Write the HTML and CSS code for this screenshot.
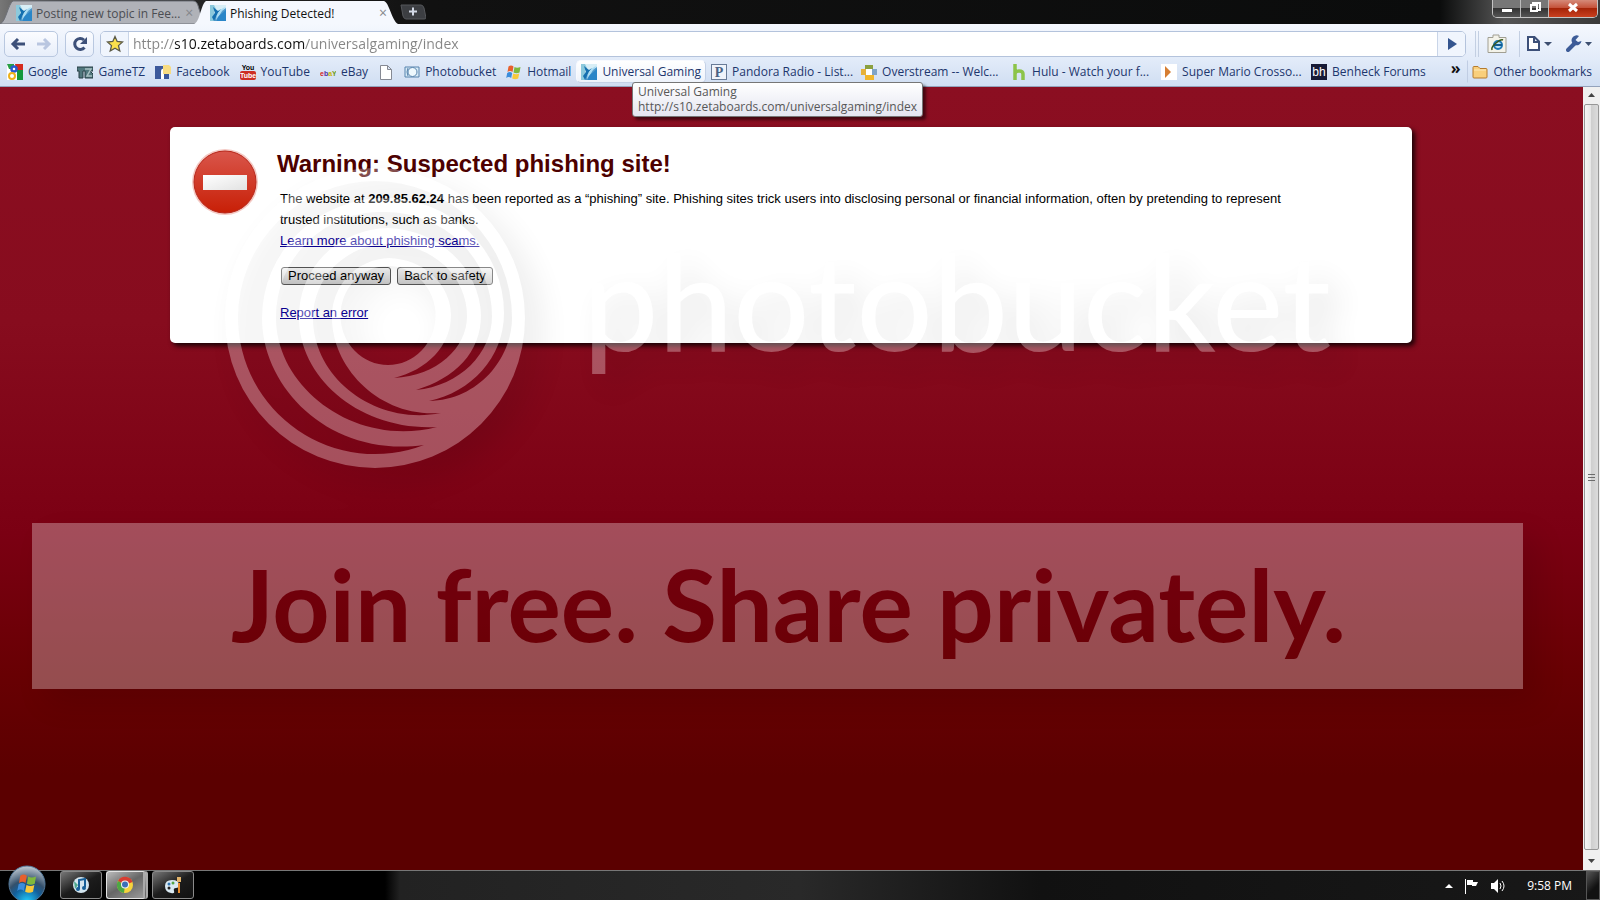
FILE: index.html
```html
<!DOCTYPE html>
<html lang="en">
<head>
    <meta charset="UTF-8">
    <meta name="viewport" content="width=device-width, initial-scale=1.0">
    <title>Phishing Detected!</title>
    <link rel="stylesheet" href="styles.css">
</head>
<body>
    <!-- shared icons -->
    <svg class="defs" width="0" height="0">
        <defs>
            <linearGradient id="zbBlue" x1="0" y1="0" x2="1" y2="1">
                <stop offset="0" stop-color="#8fd0ee"/>
                <stop offset="1" stop-color="#1566ab"/>
            </linearGradient>
            <symbol id="zeta" viewBox="0 0 16 16">
                <rect width="16" height="16" fill="#d8eef6"/>
                <path d="M0 0h4l2 4-2 3 2 4-1 5H0z" fill="#8cc9dc"/>
                <path d="M16 3v13H4q2-8 12-13z" fill="url(#zbBlue)"/>
                <path d="M3 2l5 4 3-2q-4 5-5 8l-2 4-2-4 3-4z" fill="#1570b0"/>
                <path d="M8 8q3-5 8-6-5 4-7 9l-3 4q0-4 2-7z" fill="#a9dcf3"/>
                <path d="M10 10l6-5v11H7q0-4 3-6z" fill="#2a86c8"/>
            </symbol>
            <symbol id="winflag" viewBox="0 0 16 16">
                <path d="M2.500 2.500q2.500-2 5 0L6.500 8q-2.500-2-5 0z" fill="#e8602c"/>
                <path d="M8.500 3q2.500 1.500 6 0l-1 5.500q-3 1.500-6 0z" fill="#7fb93c"/>
                <path d="M1.200 9q2.500-2 5 0l-1 5q-2.500-2-5 0z" fill="#3b8ddb"/>
                <path d="M7.200 9.600q3 1.500 6 0l-1 5q-3 1.500-6 0z" fill="#f8c93a"/>
            </symbol>
        </defs>
    </svg>

    <header class="titlebar">
        <div class="tabs">
            <div class="tab">
                <svg class="tab-shape" viewBox="0 0 204 24" preserveAspectRatio="none"><path d="M0 24C6 22 8 4 13 1h180c4 0 5 4 6 8l5 15z" fill="#b0b2b8" stroke="#6d7078"/></svg>
                <svg class="icon"><use href="#zeta"/></svg>
                <span class="tab-title">Posting new topic in Fee...</span>
                <button class="tab-close" aria-label="Close tab">×</button>
            </div>
            <div class="tab active">
                <svg class="tab-shape" viewBox="0 0 204 24" preserveAspectRatio="none"><path d="M0 24C6 22 7 4 12 1h178c5 1 8 20 14 23z" fill="#f5f8fe"/></svg>
                <svg class="icon"><use href="#zeta"/></svg>
                <span class="tab-title">Phishing Detected!</span>
                <button class="tab-close" aria-label="Close tab">×</button>
            </div>
            <button class="new-tab" aria-label="New tab">
                <svg width="26" height="16" viewBox="0 0 26 16"><path d="M1 1h20q2 0 3 3l2 10q0 1-2 1H6Q4 15 3 12z" fill="#3c3e42" stroke="#55575b"/><path d="M9 7.500h8M13 3.500v8" stroke="#d3d9e6" stroke-width="2"/></svg>
            </button>
        </div>
        <div class="window-buttons">
            <button class="minimize" aria-label="Minimize"><svg width="12" height="14" viewBox="0 0 12 14"><rect x="1" y="9" width="10" height="3" fill="#fff"/></svg></button>
            <button class="restore" aria-label="Restore"><svg width="12" height="14" viewBox="0 0 12 14"><path d="M4 5V3h7v7H9M2 5h6v6H2z" fill="none" stroke="#fff" stroke-width="2"/></svg></button>
            <button class="close" aria-label="Close"><svg width="12" height="14" viewBox="0 0 12 14"><path d="M2 4l8 7M10 4l-8 7" stroke="#fff" stroke-width="3"/></svg></button>
        </div>
    </header>

    <nav class="toolbar">
        <div class="button-group nav-buttons">
            <button aria-label="Back"><svg width="16" height="16" viewBox="0 0 16 16"><path d="M15 8H3M8 3L3 8l5 5" fill="none" stroke="#3d5079" stroke-width="3"/></svg></button>
            <button aria-label="Forward"><svg width="16" height="16" viewBox="0 0 16 16"><path d="M1 8h12M8 3l5 5-5 5" fill="none" stroke="#b9c6e0" stroke-width="3"/></svg></button>
        </div>
        <div class="button-group reload">
            <button aria-label="Reload"><svg width="16" height="16" viewBox="0 0 16 16"><path d="M12.500 11.500A5.500 5.500 0 1 1 12 4" fill="none" stroke="#3d5079" stroke-width="3"/><path d="M15 1v7H8z" fill="#3d5079"/></svg></button>
        </div>
        <div class="omnibox">
            <button class="star" aria-label="Bookmark this page"><svg width="18" height="18" viewBox="0 0 18 18"><path d="M9 1.500l2.200 5 5.300.5-4 3.600 1.300 5.400L9 13.200 4.200 16l1.300-5.400-4-3.600 5.300-.5z" fill="#fbe04c" stroke="#5b5a48" stroke-width="1.300"/></svg></button>
            <input class="url" type="text" aria-label="Address" value="http://s10.zetaboards.com/universalgaming/index">
            <button class="go" aria-label="Go"><svg width="12" height="12" viewBox="0 0 12 12"><path d="M2 0l9 6-9 6z" fill="#34558f"/></svg></button>
        </div>
        <div class="tools">
            <button class="ie-tab" aria-label="IE Tab"><svg width="20" height="20" viewBox="0 0 20 20"><path d="M1 3.500h5V1h6v2.500h7v15H1z" fill="#f4f3ea" stroke="#a19f92"/><circle cx="11" cy="11" r="4" fill="#bfe4f5" stroke="#1f79b5" stroke-width="2"/><path d="M7 11h8" stroke="#155d92" stroke-width="2"/><path d="M5 16q-1-3 4-7t7-3" fill="none" stroke="#37571c" stroke-width="1.500"/></svg></button>
            <button class="menu" aria-label="Page menu"><svg width="26" height="18" viewBox="0 0 26 18"><path d="M2 2h6.500L13 6.500V15H2zM8 2v5h5" fill="#fff" stroke="#3d5079" stroke-width="2"/><path d="M18 7h8l-4 4z" fill="#3d4f70"/></svg></button>
            <button class="menu" aria-label="Tools menu"><svg width="26" height="18" viewBox="0 0 26 18"><path d="M2 15l7-7" stroke="#3d5c98" stroke-width="4" stroke-linecap="round"/><path d="M13 1a5 5 0 1 0 2.500 5L12 7 9.500 5z" fill="#3d5c98"/><path d="M19 7h7l-3.500 4z" fill="#3d4f70"/></svg></button>
        </div>
    </nav>

    <div class="bookmarks">
        <a class="bookmark" href="#"><svg class="icon" viewBox="0 0 16 16"><rect width="16" height="16" fill="#fff"/><path d="M8 0h8v6H9z" fill="#d52b1e"/><path d="M10 6h6v10h-6z" fill="#15983c"/><path d="M0 0h7v5H2z" fill="#279f45"/><circle cx="7" cy="5" r="2.500" fill="#fff" stroke="#2a5bd0" stroke-width="2.500"/><circle cx="5" cy="12" r="3" fill="#fff" stroke="#eeb21b" stroke-width="2"/></svg>Google</a>
        <a class="bookmark" href="#"><svg class="icon" viewBox="0 0 16 16"><path d="M0 3h16v4h-3l3 3v4H8V7H6v7H2V7H0z" fill="#50777d" stroke="#263f44"/><path d="M8 5h6l-4 7h5" fill="none" stroke="#a9c2c4" stroke-width="1.500"/></svg>GameTZ</a>
        <a class="bookmark" href="#"><svg class="icon" viewBox="0 0 16 16"><rect y="2" width="14" height="13" fill="#3c599b"/><path d="M9 5q-3-1-3 3v7h3V9h2V7H9z" fill="#fff"/><path d="M8 1h6l2 2v7H8z" fill="#f8dc81"/></svg>Facebook</a>
        <a class="bookmark" href="#"><svg class="icon" viewBox="0 0 16 16"><rect y="7" width="16" height="9" rx="2" fill="#cd2e25"/><text x="8" y="6" class="yt-you">You</text><text x="8" y="14" class="yt-tube">Tube</text></svg>YouTube</a>
        <a class="bookmark" href="#"><svg class="icon" viewBox="0 0 16 16"><text y="12" class="ebay"><tspan fill="#d62020">e</tspan><tspan fill="#4a2fa4">b</tspan><tspan fill="#c8b400">a</tspan><tspan fill="#6c9c14">Y</tspan></text></svg>eBay</a>
        <a class="bookmark" href="#" aria-label="Untitled"><svg class="icon" viewBox="0 0 16 16"><path d="M2.500 1.500h7l4 4v10h-11zM9.500 1.500v4h4" fill="#fff" stroke="#858993"/></svg></a>
        <a class="bookmark" href="#"><svg class="icon" viewBox="0 0 16 16"><path d="M1 3h14v10H1z" fill="#d7eaf6" stroke="#5783ad"/><circle cx="8.500" cy="8" r="4.500" fill="#eef8fd" stroke="#5783ad"/><path d="M4 4q-2 4 0 8" fill="none" stroke="#5783ad"/></svg>Photobucket</a>
        <a class="bookmark" href="#"><svg class="icon"><use href="#winflag"/></svg>Hotmail</a>
        <a class="bookmark hovered" href="#"><svg class="icon"><use href="#zeta"/></svg>Universal Gaming</a>
        <a class="bookmark long" href="#"><svg class="icon" viewBox="0 0 16 16"><rect x=".5" y=".5" width="15" height="15" fill="#eff3fa" stroke="#687b97"/><text x="8" y="13" class="pandora">P</text></svg>Pandora Radio - List...</a>
        <a class="bookmark long" href="#"><svg class="icon" viewBox="0 0 16 16"><path d="M4 1h8v4H4z" fill="#8ba03f"/><path d="M0 5h5v6H0z" fill="#e6b13a"/><path d="M11 5h5v6h-5z" fill="#7fa4c8"/><path d="M4 11h9v5H4z" fill="#f1b62c"/><path d="M5 5h6v6H5z" fill="#fff"/></svg>Overstream -- Welc...</a>
        <a class="bookmark long" href="#"><svg class="icon" viewBox="0 0 16 16"><path d="M4 0v16M4 10q0-3 4-3t4 3v6" fill="none" stroke="#8cc449" stroke-width="3.500"/></svg>Hulu - Watch your f...</a>
        <a class="bookmark long" href="#"><svg class="icon" viewBox="0 0 16 16"><rect width="16" height="16" fill="#fff"/><path d="M4 2l6 6-6 6z" fill="#d67e32"/></svg>Super Mario Crosso...</a>
        <a class="bookmark" href="#"><svg class="icon" viewBox="0 0 16 16"><rect width="16" height="16" fill="#171b36"/><text x="8" y="12" class="bh">bh</text></svg>Benheck Forums</a>
        <button class="overflow" aria-label="More bookmarks">»</button>
        <a class="bookmark other" href="#"><svg class="icon" viewBox="0 0 16 16"><path d="M1 3.500q0-1 1-1h4l2 2h6q1 0 1 1V13q0 1-1 1H2q-1 0-1-1z" fill="#f9cf7b" stroke="#b57b2c"/><path d="M2 6h12" stroke="#fde9b9"/></svg>Other bookmarks</a>
    </div>

    <div class="viewport">
        <main class="page">
            <section class="warning">
                <svg class="stop" width="68" height="68" viewBox="0 0 68 68">
                    <defs>
                        <linearGradient id="red" x1="0" y1="0" x2="0" y2="1"><stop offset="0" stop-color="#d9564b"/><stop offset="1" stop-color="#c81f06"/></linearGradient>
                        <linearGradient id="bar" x1="0" y1="0" x2="1" y2="1"><stop offset="0" stop-color="#fff"/><stop offset="1" stop-color="#e2e2e2"/></linearGradient>
                    </defs>
                    <circle cx="34" cy="34" r="33" fill="#f4c9c4"/>
                    <circle cx="34" cy="34" r="31" fill="url(#red)" stroke="#b8281b"/>
                    <rect x="12" y="27" width="44" height="15" fill="url(#bar)"/>
                </svg>
                <div class="message">
                    <h1>Warning: Suspected phishing site!</h1>
                    <div class="details">
                        <p>The website at <strong>209.85.62.24</strong> has been reported as a “phishing” site. Phishing sites trick users into disclosing personal or financial information, often by pretending to represent trusted institutions, such as banks.</p>
                        <a href="#">Learn more about phishing scams.</a>
                        <div class="actions">
                            <button>Proceed anyway</button>
                            <button>Back to safety</button>
                        </div>
                        <a href="#">Report an error</a>
                    </div>
                </div>
            </section>

            <!-- translucent photobucket watermark, lies over the whole page -->
            <div class="watermark">
                <div class="brand">
                    <svg class="swirl" width="302" height="302" viewBox="-1 -1 302 302">
                        <path fill="#fff" fill-rule="evenodd" d="M150 0A150 150 0 0 1 150 300A150 150 0 0 1 150 0z
                            M199 277A137 137 0 0 1 13 150A137 137 0 0 1 150 13A137 137 0 0 1 287 150C287 190 254 232 204 233C246 224 279 190 279 145A119 115 0 0 0 160 30A123 120 0 0 0 37 150C37 220 105 290 199 277z
                            M212 259C130 280 51 220 51 150A105 105 0 0 1 160 44A107 104 0 0 1 267 148C267 185 235 218 191 222C230 210 256 185 256 147A97 90 0 0 0 163 60A90 88 0 0 0 74 150C74 210 135 263 212 259z
                            M216 245C150 258 88 210 88 150A75 74 0 0 1 164 76A78 72 0 0 1 242 148C242 180 212 208 169 210C202 202 226 178 226 147A64 58 0 0 0 164 90A59 58 0 0 0 107 150C107 200 155 250 216 245z
                            M163 98A47 49 0 0 1 163 197A47 49 0 0 1 163 98z"/>
                    </svg>
                    <span class="brand-name">photobucket</span>
                </div>
                <div class="banner">Join free. Share privately.</div>
            </div>
        </main>
        <div class="scrollbar">
            <svg width="17" height="17" viewBox="0 0 17 17"><path d="M5 10l3.500-4 3.500 4z" fill="#444"/></svg>
            <div class="thumb"><svg width="8" height="9" viewBox="0 0 8 9"><path d="M0 1.500h7M0 4.500h7M0 7.500h7" stroke="#6d6d6d"/></svg></div>
            <svg width="17" height="20" viewBox="0 0 17 20"><path d="M5 9l3.500 4L12 9z" fill="#444"/></svg>
        </div>
        <div class="tooltip">Universal Gaming<br>http://s10.zetaboards.com/universalgaming/index</div>
    </div>

    <footer class="taskbar">
        <button class="start" aria-label="Start">
            <svg width="38" height="36" viewBox="0 0 38 36">
                <defs>
                    <radialGradient id="orb" cx=".5" cy="1" r="1"><stop offset="0" stop-color="#22d0ff"/><stop offset=".4" stop-color="#125f9c"/><stop offset=".6" stop-color="#34506b"/><stop offset="1" stop-color="#c3ccd5"/></radialGradient>
                </defs>
                <circle cx="19" cy="19" r="18" fill="url(#orb)" stroke="#51789a"/>
                <svg x="9" y="7" width="21" height="22"><use href="#winflag"/></svg>
            </svg>
        </button>
        <div class="tasks">
            <button class="task" aria-label="iTunes"><svg width="18" height="18" viewBox="0 0 18 18"><circle cx="9" cy="9" r="8" fill="#d3e5ef"/><path d="M7 13V4l6-1v8" fill="none" stroke="#175f98" stroke-width="2"/><circle cx="6" cy="13" r="2" fill="#175f98"/><circle cx="12" cy="12" r="2" fill="#175f98"/><path d="M2 5l4 4-3 4z" fill="#4fa98d"/></svg></button>
            <button class="task current" aria-label="Chrome"><svg width="18" height="18" viewBox="0 0 18 18"><circle cx="9" cy="9" r="8" fill="#f6d33c"/><path d="M9 9L2 5a8 8 0 0 1 14.500 1z" fill="#d63d33"/><path d="M9 9l-1 8A8 8 0 0 1 2 5z" fill="#4da745"/><circle cx="9" cy="8.500" r="4" fill="#f2f2f2"/><circle cx="9" cy="8.500" r="3" fill="#3c6fb8"/></svg></button>
            <button class="task" aria-label="Paint"><svg width="18" height="18" viewBox="0 0 18 18"><path d="M1 10q0-6 7-6t7 5q0 3-3 3t-2 3-3 2q-6-1-6-7z" fill="#d9e9f2"/><circle cx="5" cy="8" r="1.500" fill="#3176b5"/><circle cx="9" cy="7" r="1.500" fill="#53a344"/><circle cx="5" cy="12" r="1.500" fill="#222"/><path d="M14 7h2v10h-2z" fill="#e98f31"/><path d="M13 1h4v5h-4z" fill="#e2b46b"/></svg></button>
        </div>
        <div class="tray">
            <svg width="8" height="6" viewBox="0 0 8 6"><path d="M0 5l4-4 4 4z" fill="#fff"/></svg>
            <svg width="14" height="16" viewBox="0 0 14 16"><path d="M.500 1v15" stroke="#fff"/><path d="M2 2h6v2h5l-2 4H7V7H2z" fill="#fff"/></svg>
            <svg width="14" height="16" viewBox="0 0 14 16"><path d="M0 5h3l4-4v14l-4-4H0z" fill="#fff"/><path d="M9 5q2 3 0 6M11 3q4 5 0 10" fill="none" stroke="#fff"/></svg>
            <time>9:58 PM</time>
        </div>
        <button class="show-desktop" aria-label="Show desktop"></button>
    </footer>
</body>
</html>
```
FILE: styles.css
```css
* {
    box-sizing: border-box;
}
body {
    margin: 0;
    height: 100vh;
    display: flex;
    flex-direction: column;
    overflow: hidden;
    font-family: "Open Sans", "Noto Sans", sans-serif;
    font-size: 12px;
    background: #000;
}
button {
    border: 0;
    padding: 0;
    background: none;
    font-family: inherit;
}
svg {
    display: block;
    flex: none;
}
.defs {
    position: absolute;
}
.icon {
    width: 16px;
    height: 16px;
}

/* title bar */
.titlebar {
    display: flex;
    justify-content: space-between;
    height: 24px;
    flex: none;
    background: linear-gradient(90deg, #777 0, #333 60px, #111 430px, #0b0c0c 90%, #555 94%, #3a3a3a 100%);
}
.tabs {
    display: flex;
    align-items: center;
}
.tab {
    position: relative;
    display: flex;
    align-items: center;
    gap: 4px;
    width: 204px;
    height: 24px;
    padding: 2px 10px 0 16px;
    color: #4b4d52;
}
.tab.active {
    margin-left: -10px;
    color: #111;
}
.tab-shape {
    position: absolute;
    left: 0;
    top: 0;
    width: 100%;
    height: 100%;
}
.tab .icon, .tab-title, .tab-close {
    position: relative;
}
.tab-title {
    flex: 1;
    white-space: nowrap;
}
.tab-close {
    width: 10px;
    font-size: 14px;
    line-height: 16px;
    color: #85878c;
}
.new-tab {
    margin-left: 2px;
}
.window-buttons {
    display: flex;
    height: 18px;
    margin-right: 2px;
    border: 1px solid #c4c4c4;
    border-top: 0;
    border-radius: 0 0 5px 5px;
    overflow: hidden;
}
.window-buttons button {
    display: flex;
    justify-content: center;
    width: 28px;
    border-right: 1px solid #bbb;
    background: linear-gradient(#777 45%, #333 50%, #555);
}
.window-buttons .close {
    width: 48px;
    border-right: 0;
    background: linear-gradient(#d58a79 0, #c5523a 45%, #a52408 50%, #c9401f);
}

/* toolbar */
.toolbar {
    display: flex;
    align-items: center;
    height: 35px;
    flex: none;
    padding: 4px 8px 0 4px;
    background: linear-gradient(#f5f8fe, #e2ebf9);
}
.button-group {
    display: flex;
    height: 26px;
    border: 1px solid #b9c8e0;
    border-radius: 5px;
    background: linear-gradient(#fbfcff, #e7eefa);
}
.button-group button {
    display: flex;
    flex: 1;
    align-items: center;
    justify-content: center;
}
.nav-buttons {
    width: 54px;
}
.reload {
    width: 29px;
    margin: 0 6px 0 7px;
}
.omnibox {
    display: flex;
    flex: 1;
    height: 26px;
    border: 1px solid #b4c3dc;
    border-radius: 5px;
    background: #fff;
    overflow: hidden;
}
.star, .go {
    display: flex;
    align-items: center;
    justify-content: center;
    width: 28px;
    background: #f0f5fd;
    border-right: 1px solid #c9d5e8;
}
.go {
    border-right: 0;
    border-left: 1px solid #c9d5e8;
}
.url {
    flex: 1;
    min-width: 0;
    border: 0;
    padding: 0 0 0 4px;
    outline: 0;
    font: 14px "Open Sans", "Noto Sans", sans-serif;
    /* host part is darker than the rest of the address */
    color: transparent;
    background: linear-gradient(90deg, #858585 46px, #111 46px, #111 176px, #858585 176px);
    -webkit-background-clip: text;
    background-clip: text;
}
.tools {
    display: flex;
    align-items: center;
    gap: 14px;
    margin-left: 9px;
    border-left: 1px solid #c3cfe2;
}
.ie-tab {
    height: 26px;
    margin: 0 -8px 0 2px;
    padding: 0 12px 0 8px;
    border-left: 1px solid #c3cfe2;
    border-right: 1px solid #c3cfe2;
}

/* bookmarks */
.bookmarks {
    display: flex;
    align-items: center;
    height: 28px;
    flex: none;
    padding: 0 3px 2px 2px;
    background: linear-gradient(#e2ebf9, #d0def2);
    border-bottom: 1px solid #93a2bb;
}
.bookmark {
    display: flex;
    align-items: center;
    gap: 5px;
    height: 23px;
    padding: 0 4px;
    border: 1px solid transparent;
    border-radius: 5px;
    color: #1d366d;
    text-decoration: none;
    white-space: nowrap;
}
.bookmark.long {
    width: 150px;
}
.bookmark.hovered {
    background: linear-gradient(#fff, #eef3fb);
    border-color: #f8faff #c4d1e6 #c4d1e6 #f8faff;
}
.yt-you, .yt-tube {
    font: bold 7px "Liberation Sans", sans-serif;
    text-anchor: middle;
}
.yt-tube {
    fill: #fff;
}
.ebay {
    font: bold 7px "Liberation Sans", sans-serif;
}
.pandora {
    font: bold 14px "Liberation Serif", serif;
    text-anchor: middle;
    fill: #4a6183;
}
.bh {
    font: 12px "Liberation Sans", sans-serif;
    text-anchor: middle;
    fill: #fff;
}
.overflow {
    margin-left: auto;
    padding: 0 7px 8px 0;
    font-size: 16px;
    line-height: 16px;
    font-weight: bold;
    color: #111;
}
.other {
    border-left: 1px solid #c0cde3;
    border-radius: 0;
}

/* page */
.viewport {
    position: relative;
    display: flex;
    flex: 1;
    min-height: 0;
}
.page {
    position: relative;
    flex: 1;
    overflow: hidden;
    background: linear-gradient(#8b0e21 0, #870c1e 30%, #7b0013 57%, #680003 75%, #5b0000 88%, #5b0000 100%);
    font-family: "Liberation Sans", Arial, sans-serif;
}
.warning {
    display: flex;
    gap: 18px;
    margin: 40px 171px 40px 170px;
    padding: 21px 110px 20px 21px;
    background: #fff;
    border-radius: 5px;
    box-shadow: 3px 3px 5px rgba(0, 0, 0, 0.8);
}
.message {
    flex: 1;
}
h1 {
    margin: 2px 0 10px;
    font-size: 24px;
    line-height: 28px;
    color: #4d0000;
}
.details {
    padding-left: 3px;
    font-size: 13px;
    line-height: 21px;
    color: #000;
}
.details p {
    margin: 0;
}
.details a {
    color: #0a0096;
}
.actions {
    display: flex;
    gap: 6px;
    margin: 16px 1px 17px;
}
.actions button {
    height: 18px;
    padding: 0 6px;
    border: 1px solid #555;
    border-radius: 3px;
    background: linear-gradient(#f4f4f4, #c8c8c8);
    font-size: 13px;
    line-height: 16px;
    color: #000;
}

/* watermark */
.watermark {
    position: absolute;
    left: 0;
    top: 0;
    width: 100%;
    padding: 80px 60px 0 32px;
    opacity: 0.3;
    pointer-events: none;
    font-family: Lato, sans-serif;
    filter: drop-shadow(14px 14px 16px rgba(0, 0, 0, 0.35));
}
.brand {
    display: flex;
    gap: 57px;
    padding-left: 192px;
}
.brand-name {
    color: #fff;
    font-size: 134px;
    line-height: 160px;
    font-weight: 500;
    padding-top: 53px;
}
.banner {
    margin-top: 54px;
    height: 166px;
    padding-left: 22px;
    background: #fff;
    color: #6c0009;
    font-size: 100px;
    line-height: 160px;
    font-weight: bold;
    text-align: center;
    white-space: nowrap;
}

.scrollbar {
    display: flex;
    flex-direction: column;
    width: 17px;
    background: #f0f0f0;
}
.thumb {
    display: flex;
    flex: 1;
    align-items: center;
    justify-content: center;
    margin: 0 1px;
    border: 1px solid #979797;
    border-radius: 2px;
    background: linear-gradient(90deg, #f5f5f5, #e6e6e6 45%, #cfcfcf 50%, #dcdcdc);
}
.tooltip {
    position: absolute;
    left: 632px;
    top: -5px;
    padding: 1px 5px 2px;
    border: 1px solid #767676;
    border-radius: 3px;
    background: linear-gradient(#fff, #e4e5f0);
    box-shadow: 3px 3px 3px rgba(0, 0, 0, 0.5);
    line-height: 15px;
    color: #575757;
}

/* taskbar */
.taskbar {
    position: relative;
    display: flex;
    height: 30px;
    flex: none;
    border-top: 1px solid #777;
    background: linear-gradient(90deg, #000 385px, #222 400px, #292929 50%, #111 65%, #181818 100%);
}
.start {
    width: 38px;
    height: 36px;
    margin: -6px 14px 0 8px;
}
.tasks {
    display: flex;
    gap: 4px;
}
.task {
    display: flex;
    align-items: center;
    justify-content: center;
    width: 42px;
    height: 28px;
    border: 1px solid #8a8a8a;
    border-radius: 3px;
    background: linear-gradient(150deg, #777, #1c1c1c 50%, #111);
}
.task.current {
    border-color: #e4e4e4;
    border-right: 5px double #aaa;
    background: linear-gradient(150deg, #bbb, #666 50%, #999);
}
.tray {
    display: flex;
    align-items: center;
    gap: 12px;
    margin-left: auto;
    color: #fff;
}
.tray time {
    padding: 0 14px 0 10px;
}
.show-desktop {
    width: 14px;
    border: 1px solid #555;
    background: linear-gradient(135deg, #555, #111 60%);
}
```
